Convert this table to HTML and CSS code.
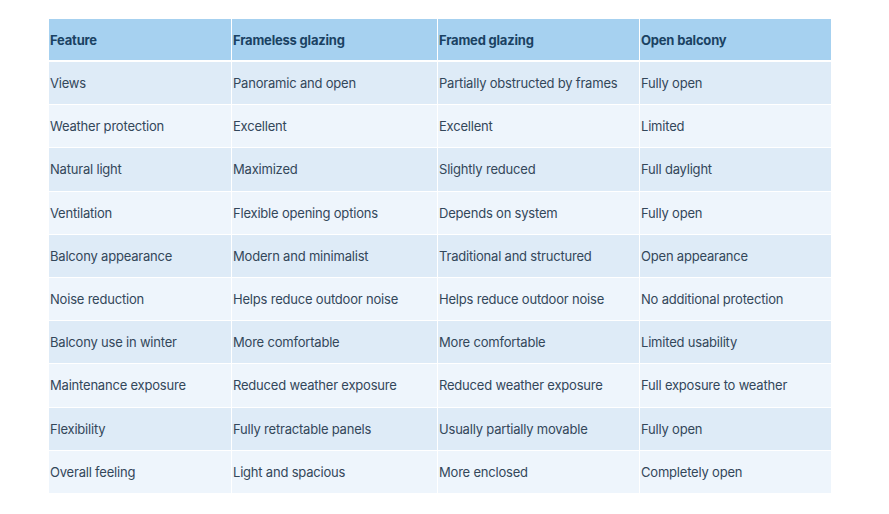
FILE: index.html
```html
<!DOCTYPE html>
<html lang="en">
<head>
<meta charset="utf-8">
<title>Balcony glazing comparison</title>
<link rel="stylesheet" href="styles.css">
</head>
<body>
<table class="compare">
  <thead>
    <tr><th>Feature</th><th>Frameless glazing</th><th>Framed glazing</th><th>Open balcony</th></tr>
  </thead>
  <tbody>
    <tr><td>Views</td><td>Panoramic and open</td><td>Partially obstructed by frames</td><td>Fully open</td></tr>
    <tr><td>Weather protection</td><td>Excellent</td><td>Excellent</td><td>Limited</td></tr>
    <tr><td>Natural light</td><td>Maximized</td><td>Slightly reduced</td><td>Full daylight</td></tr>
    <tr><td>Ventilation</td><td>Flexible opening options</td><td>Depends on system</td><td>Fully open</td></tr>
    <tr><td>Balcony appearance</td><td>Modern and minimalist</td><td>Traditional and structured</td><td>Open appearance</td></tr>
    <tr><td>Noise reduction</td><td>Helps reduce outdoor noise</td><td>Helps reduce outdoor noise</td><td>No additional protection</td></tr>
    <tr><td>Balcony use in winter</td><td>More comfortable</td><td>More comfortable</td><td>Limited usability</td></tr>
    <tr><td>Maintenance exposure</td><td>Reduced weather exposure</td><td>Reduced weather exposure</td><td>Full exposure to weather</td></tr>
    <tr><td>Flexibility</td><td>Fully retractable panels</td><td>Usually partially movable</td><td>Fully open</td></tr>
    <tr><td>Overall feeling</td><td>Light and spacious</td><td>More enclosed</td><td>Completely open</td></tr>
  </tbody>
</table>
</body>
</html>
```
FILE: styles.css
```css
html, body {
  margin: 0;
  padding: 0;
  background: #ffffff;
}
body {
  padding: 18px 0 0 48px;
  font-family: Inter, "Noto Sans", sans-serif;
  font-size: 13px;
  color: #33475a;
}
.compare {
  border-collapse: separate;
  border-spacing: 1px;
  width: 784px;
  table-layout: fixed;
}
.compare th:nth-child(1) { width: 181px; }
.compare th:nth-child(2) { width: 204px; }
.compare th:nth-child(3) { width: 200px; }
.compare th:nth-child(4) { width: 190px; }
.compare th,
.compare td {
  text-align: left;
  padding: 0 0 0 1px;
  height: 42.2px;
  font-weight: 400;
  letter-spacing: -0.2px;
}
.compare th {
  background: #a6d1f0;
  color: #1a4263;
  font-weight: 700;
  height: 41px;
}
.compare thead tr th {
  border-bottom: 1px solid #ffffff;
}
.compare tbody tr:nth-child(odd) td {
  background: #deebf7;
}
.compare tbody tr:nth-child(even) td {
  background: #eef5fc;
}
```
